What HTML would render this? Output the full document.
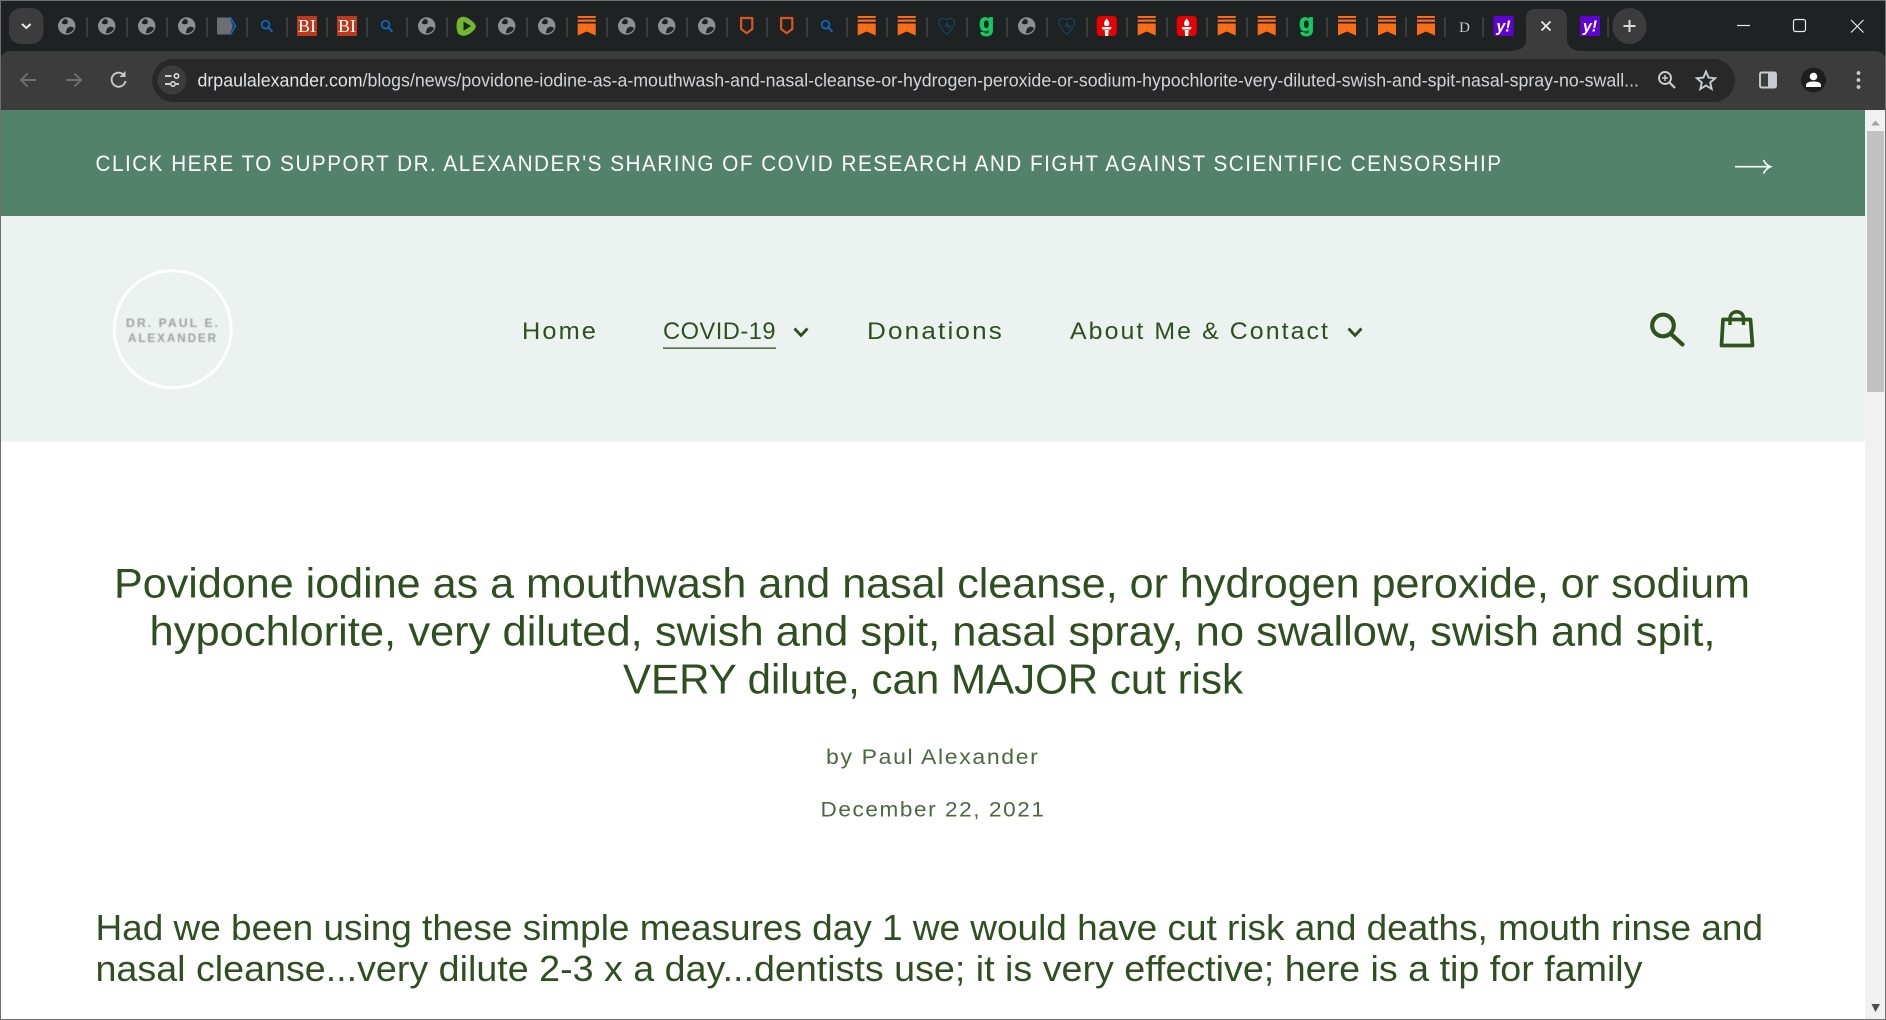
<!DOCTYPE html>
<html lang="en">
<head>
<meta charset="utf-8">
<title>Povidone iodine</title>
<style>
html,body{margin:0;padding:0;width:1886px;height:1020px;overflow:hidden;background:#fff}
svg{display:block;position:absolute;left:0;top:0}
text{font-family:"Liberation Sans",sans-serif}
.h{font-size:42px;fill:#2e4f1f}
.p{font-size:36px;fill:#2e4f1f}
.n{font-size:24px;fill:#2e4f1f;letter-spacing:2px}
.m{font-size:21px;fill:#4c6840;letter-spacing:1.5px}
.b{font-size:22px;fill:#fff;letter-spacing:1.6px}
.g{font-size:25px;font-weight:700;fill:#12c95f;stroke:#12c95f;stroke-width:.8px}
.y{font-size:16px;font-weight:700;font-style:italic;fill:#fff}
</style>
</head>
<body>
<svg width="1886" height="1020" viewBox="0 0 1886 1020" xmlns="http://www.w3.org/2000/svg">
<defs>
<g id="gl"><circle r="8.7" fill="#8c8f93"/><path d="M-1-7.200C1.500-5.500 1.800-3 .2-2.200S-3.500-1.800-5-2.600C-4.500-4.800-3-6.500-1-7.200ZM7.400 2.400C5.500.6 3.800.2 2 1.200S.2 3.500-.4 4.800-.6 6.600-.2 7.400C3 7.400 6 5.400 7.400 2.400Z" fill="#202323"/></g>
<g id="se"><circle cx="-1.200" cy="-1.400" r="3.900" fill="none" stroke="#1268c4" stroke-width="1.700"/><path d="M1.600 1.600L5.200 5.200" stroke="#1268c4" stroke-width="1.900" stroke-linecap="round"/></g>
<g id="bm"><rect x="-9" y="-10" width="18" height="2" fill="#f96d16"/><rect x="-9" y="-6.500" width="18" height="2.300" fill="#f96d16"/><path d="M-9-2.500H9V9.500L0 5.500-9 9.500Z" fill="#f96d16"/></g>
<g id="sh"><path d="M-5.600-7.500H5.600V3.500L0 7.800-5.600 3.500Z" fill="none" stroke="#d9561f" stroke-width="2.200" stroke-linejoin="round"/></g>
<g id="he"><path d="M0 8.500C-4 5-8-1-7.800-4.500-7.600-7.500-3.500-8.500 0-6.500 3.500-8.500 7.600-7.500 7.800-4.500 8-1 4 5 0 8.500ZM-3 0H-.8L.5-3 1.800 2 3 0H5" fill="none" stroke="#0f4a66" stroke-width="1.100"/></g>
<g id="to"><rect x="-10" y="-10" width="20" height="20" rx="3.500" fill="#e60000"/><path d="M0-7.500C3-4.500 3.300-1.500 1.500 0H-1.500C-3.300-1.500-3-4.500 0-7.500Z" fill="#fff"/><path d="M-5 1H5L4 3.500H-4ZM-2 4H2L1.500 10H-1.500Z" fill="#fff"/></g>
</defs>

<!-- tab strip -->
<rect width="1886" height="62" fill="#1f2222"/>
<rect x="9" y="8" width="34.500" height="36" rx="12" fill="#3c3c3c"/>
<path d="M22 24L26.300 28 30.600 24" fill="none" stroke="#e8eaed" stroke-width="2"/>
<g fill="#3a3d3e">
<rect x="86" y="17" width="2" height="20"/><rect x="126" y="17" width="2" height="20"/><rect x="166" y="17" width="2" height="20"/><rect x="206" y="17" width="2" height="20"/><rect x="246" y="17" width="2" height="20"/><rect x="286" y="17" width="2" height="20"/><rect x="326" y="17" width="2" height="20"/><rect x="366" y="17" width="2" height="20"/><rect x="406" y="17" width="2" height="20"/><rect x="446" y="17" width="2" height="20"/><rect x="486" y="17" width="2" height="20"/><rect x="526" y="17" width="2" height="20"/><rect x="566" y="17" width="2" height="20"/><rect x="606" y="17" width="2" height="20"/><rect x="646" y="17" width="2" height="20"/><rect x="686" y="17" width="2" height="20"/><rect x="726" y="17" width="2" height="20"/><rect x="766" y="17" width="2" height="20"/><rect x="806" y="17" width="2" height="20"/><rect x="846" y="17" width="2" height="20"/><rect x="886" y="17" width="2" height="20"/><rect x="926" y="17" width="2" height="20"/><rect x="966" y="17" width="2" height="20"/><rect x="1006" y="17" width="2" height="20"/><rect x="1046" y="17" width="2" height="20"/><rect x="1086" y="17" width="2" height="20"/><rect x="1126" y="17" width="2" height="20"/><rect x="1166" y="17" width="2" height="20"/><rect x="1206" y="17" width="2" height="20"/><rect x="1246" y="17" width="2" height="20"/><rect x="1286" y="17" width="2" height="20"/><rect x="1326" y="17" width="2" height="20"/><rect x="1366" y="17" width="2" height="20"/><rect x="1405" y="17" width="2" height="20"/><rect x="1444" y="17" width="2" height="20"/><rect x="1482" y="17" width="2" height="20"/><rect x="1607" y="17" width="2" height="20"/>
</g>
<use href="#gl" x="66.700" y="26"/><use href="#gl" x="106.700" y="26"/><use href="#gl" x="146.700" y="26"/><use href="#gl" x="186.700" y="26"/>
<path d="M218 17.500H229.500L233 26 229.500 34.500H218Q217 34.500 217 33.500V18.500Q217 17.500 218 17.500Z" fill="#6b6e72"/>
<path d="M230 17L235.500 26 230 35" fill="none" stroke="#1268c4" stroke-width="1.800"/>
<use href="#se" x="266.700" y="26"/>
<rect x="297" y="16" width="20" height="20" fill="#b93b1c"/><text x="307" y="32" text-anchor="middle" font-size="18" fill="#fff" style='font-family:"Liberation Serif",serif'>BI</text>
<rect x="337" y="16" width="20" height="20" fill="#b93b1c"/><text x="347" y="32" text-anchor="middle" font-size="18" fill="#fff" style='font-family:"Liberation Serif",serif'>BI</text>
<use href="#se" x="386.700" y="26"/>
<use href="#gl" x="426.700" y="26"/>
<path d="M458 19C462 15.500 466 16 472 21 477 25 477 28 472 32 466 36.500 462 37 458 33.500 456 28 456 24 458 19Z" fill="#74b72e"/><path d="M463.500 21.500L471 26 463.500 30.800Z" fill="#1f2222"/>
<use href="#gl" x="506.700" y="26"/><use href="#gl" x="546.700" y="26"/>
<use href="#bm" x="586.700" y="26"/>
<use href="#gl" x="626.700" y="26"/><use href="#gl" x="666.700" y="26"/><use href="#gl" x="706.700" y="26"/>
<use href="#sh" x="746.700" y="25.500"/><use href="#sh" x="786.700" y="25.500"/>
<use href="#se" x="826.700" y="26"/>
<use href="#bm" x="866.700" y="26"/><use href="#bm" x="906.700" y="26"/>
<use href="#he" x="946.700" y="26"/>
<text class="g" x="986.700" y="31" text-anchor="middle">g</text>
<use href="#gl" x="1026.700" y="26"/>
<use href="#he" x="1066.700" y="26"/>
<use href="#to" x="1106.700" y="26"/>
<use href="#bm" x="1146.700" y="26"/>
<use href="#to" x="1186.700" y="26"/>
<use href="#bm" x="1226.700" y="26"/><use href="#bm" x="1266.700" y="26"/>
<text class="g" x="1306.700" y="31" text-anchor="middle">g</text>
<use href="#bm" x="1347" y="26"/><use href="#bm" x="1387" y="26"/><use href="#bm" x="1426" y="26"/>
<text x="1464.500" y="32" text-anchor="middle" font-size="15" fill="#c8c8c8" style='font-family:"Liberation Serif",serif'>D</text>
<rect x="1493.500" y="16" width="20" height="20" fill="#5f01d1"/><text class="y" x="1503.500" y="31.500" text-anchor="middle">y!</text>
<!-- active tab -->
<path d="M1511 51C1520 51 1526 47 1526 40V19Q1526 9 1536 9H1557Q1567 9 1567 19V40C1567 47 1573 51 1582 51V62H1511Z" fill="#3c3c3c"/>
<path d="M1541.500 21.500L1550.500 30.500M1550.500 21.500L1541.500 30.500" stroke="#e8eaed" stroke-width="1.800"/>
<rect x="1580" y="16" width="20" height="20" fill="#5f01d1"/><text class="y" x="1590" y="31.500" text-anchor="middle">y!</text>
<rect x="1612.500" y="8" width="34" height="36" rx="17" fill="#3c3c3c"/>
<path d="M1629.500 20V32M1623.500 26H1635.500" stroke="#d5d7da" stroke-width="2"/>
<path d="M1737 25.500H1750" stroke="#e8eaed" stroke-width="1.200"/>
<rect x="1793.500" y="19.500" width="12" height="12" rx="2" fill="none" stroke="#e8eaed" stroke-width="1.200"/>
<path d="M1851 20L1863.500 32.500M1863.500 20L1851 32.500" stroke="#e8eaed" stroke-width="1.200"/>

<!-- toolbar -->
<path d="M0 110V63Q0 51 12 51H1511V62H1582V51H1874Q1886 51 1886 63V110Z" fill="#3c3c3c"/>
<path d="M1511 51C1520 51 1526 47 1526 40V51ZM1582 51C1573 51 1567 47 1567 40V51Z" fill="#3c3c3c"/>
<rect x="152" y="59" width="1583" height="43" rx="21.500" fill="#282828"/>
<circle cx="172" cy="80" r="14.500" fill="#3c3c3c"/>
<path d="M165 76H171.500M176 84H179" stroke="#e3e3e3" stroke-width="1.800"/><circle cx="176.500" cy="76" r="2.200" fill="none" stroke="#e3e3e3" stroke-width="1.500"/><path d="M165 84H170" stroke="#e3e3e3" stroke-width="1.800"/><circle cx="173" cy="84" r="2.200" fill="none" stroke="#e3e3e3" stroke-width="1.500"/>
<path d="M36 80H21M27.500 73.500L21 80 27.500 86.500" fill="none" stroke="#6d6f72" stroke-width="1.900"/>
<path d="M66 80H81M74.500 73.500L81 80 74.500 86.500" fill="none" stroke="#6d6f72" stroke-width="1.900"/>
<path d="M124.200 75.500A7 7 0 1 0 125.500 81" fill="none" stroke="#c7cacd" stroke-width="1.900"/><path d="M125.500 71V77H119.500Z" fill="#c7cacd"/>
<text x="197.500" y="86.500" font-size="18" fill="#e0e3e6" textLength="1441.500" lengthAdjust="spacingAndGlyphs">drpaulalexander.com<tspan fill="#d0d3d7">/blogs/news/povidone-iodine-as-a-mouthwash-and-nasal-cleanse-or-hydrogen-peroxide-or-sodium-hypochlorite-very-diluted-swish-and-spit-nasal-spray-no-swall...</tspan></text>
<circle cx="1665" cy="78" r="6" fill="none" stroke="#c9ccd0" stroke-width="1.900"/><path d="M1669.500 82.500L1675 88" stroke="#c9ccd0" stroke-width="2.200"/><path d="M1662 78H1668M1665 75V81" stroke="#c9ccd0" stroke-width="1.500"/>
<path d="M1706 71.500L1708.600 77.600 1715.200 78.200 1710.200 82.500 1711.700 89 1706 85.500 1700.300 89 1701.800 82.500 1696.800 78.200 1703.400 77.600Z" fill="none" stroke="#c9ccd0" stroke-width="1.900"/>
<rect x="1760" y="72.500" width="16" height="15" rx="1.500" fill="none" stroke="#c9ccd0" stroke-width="1.900"/><rect x="1768" y="72.500" width="8" height="15" fill="#c9ccd0"/>
<circle cx="1813.500" cy="80" r="12.500" fill="#1e1e1e"/><circle cx="1813.500" cy="76.500" r="3.800" fill="#fff"/><path d="M1806 87V85.500C1806 82 1810 81.500 1813.500 81.500S1821 82 1821 85.500V87Z" fill="#fff"/>
<circle cx="1858.500" cy="73" r="1.900" fill="#c9ccd0"/><circle cx="1858.500" cy="80" r="1.900" fill="#c9ccd0"/><circle cx="1858.500" cy="87" r="1.900" fill="#c9ccd0"/>

<!-- banner -->
<rect y="110" width="1865" height="106" fill="#53826c"/>
<text class="b" x="95.500" y="171" textLength="1407" lengthAdjust="spacingAndGlyphs">CLICK HERE TO SUPPORT DR. ALEXANDER'S SHARING OF COVID RESEARCH AND FIGHT AGAINST SCIENTIFIC CENSORSHIP</text>
<path d="M1735 166.700H1770.500M1763.500 160C1765 163 1767 165.500 1770.500 166.700 1767 168 1765 170.500 1763.500 173.500" fill="none" stroke="#fff" stroke-width="1.600"/>

<!-- header -->
<rect y="216" width="1865" height="225.500" fill="#ecf2f0"/>
<circle cx="172.700" cy="329.300" r="58.500" fill="none" stroke="#fff" stroke-width="3"/>
<g style="filter:blur(.5px)" font-weight="700" font-size="12" fill="#a0a0a0" letter-spacing="2">
<text x="126" y="327" textLength="94" lengthAdjust="spacingAndGlyphs">DR. PAUL E.</text>
<text x="128" y="342" textLength="90" lengthAdjust="spacingAndGlyphs">ALEXANDER</text>
</g>
<text class="n" x="522" y="339" textLength="76" lengthAdjust="spacingAndGlyphs">Home</text>
<text class="n" x="663" y="339" textLength="113" lengthAdjust="spacingAndGlyphs" style="letter-spacing:.5px">COVID-19</text>
<rect x="663" y="347.500" width="113" height="1.300" fill="#2e4f1f"/>
<path d="M794.500 328.500L801 335.500 807.500 328.500" fill="none" stroke="#2e4f1f" stroke-width="2.800"/>
<text class="n" x="867" y="339" textLength="137" lengthAdjust="spacingAndGlyphs">Donations</text>
<text class="n" x="1070" y="339" textLength="260" lengthAdjust="spacingAndGlyphs">About Me &amp; Contact</text>
<path d="M1348.500 328.500L1355 335.500 1361.500 328.500" fill="none" stroke="#2e4f1f" stroke-width="2.800"/>
<circle cx="1663" cy="325.500" r="10.800" fill="none" stroke="#2e531c" stroke-width="4.200"/>
<path d="M1671 334L1682.500 344.500" stroke="#2e531c" stroke-width="4.200" stroke-linecap="round"/>
<path d="M1723 319.500H1750.500L1752.500 345.500H1721.500Z" fill="none" stroke="#2e531c" stroke-width="3.700" stroke-linejoin="round"/>
<path d="M1730 325V318.500C1730 309.500 1743.500 309.500 1743.500 318.500V325" fill="none" stroke="#2e531c" stroke-width="3.400"/>

<!-- article -->
<text class="h" x="114" y="597.500" textLength="1636" lengthAdjust="spacingAndGlyphs">Povidone iodine as a mouthwash and nasal cleanse, or hydrogen peroxide, or sodium</text>
<text class="h" x="149.500" y="645.500" textLength="1566" lengthAdjust="spacingAndGlyphs">hypochlorite, very diluted, swish and spit, nasal spray, no swallow, swish and spit,</text>
<text class="h" x="623" y="693.500" textLength="620" lengthAdjust="spacingAndGlyphs">VERY dilute, can MAJOR cut risk</text>
<text class="m" x="826" y="764" textLength="213.500" lengthAdjust="spacingAndGlyphs">by Paul Alexander</text>
<text class="m" x="820.500" y="816.700" textLength="225" lengthAdjust="spacingAndGlyphs">December 22, 2021</text>
<text class="p" x="95.500" y="940" textLength="1667.500" lengthAdjust="spacingAndGlyphs">Had we been using these simple measures day 1 we would have cut risk and deaths, mouth rinse and</text>
<text class="p" x="95.500" y="981" textLength="1547" lengthAdjust="spacingAndGlyphs">nasal cleanse...very dilute 2-3 x a day...dentists use; it is very effective; here is a tip for family</text>

<!-- scrollbar -->
<rect x="1865" y="110" width="21" height="910" fill="#f1f1f1"/>
<rect x="1867" y="131" width="17" height="261" fill="#c1c1c1"/>
<path d="M1871 125.500L1875.500 120.500 1880 125.500Z" fill="#a3a3a3"/>
<path d="M1871.500 1004L1875.500 1012 1880 1004Z" fill="#505050"/>

<!-- window border -->
<rect x="0" y="0" width="1886" height="1" fill="#6f6f6f"/>
<rect x="0" y="0" width="1" height="1020" fill="#6f6f6f"/>
<rect x="0" y="1019" width="1886" height="1" fill="#6f6f6f"/>
<rect x="1885" y="0" width="1" height="1020" fill="#6f6f6f"/>
</svg>
</body>
</html>
